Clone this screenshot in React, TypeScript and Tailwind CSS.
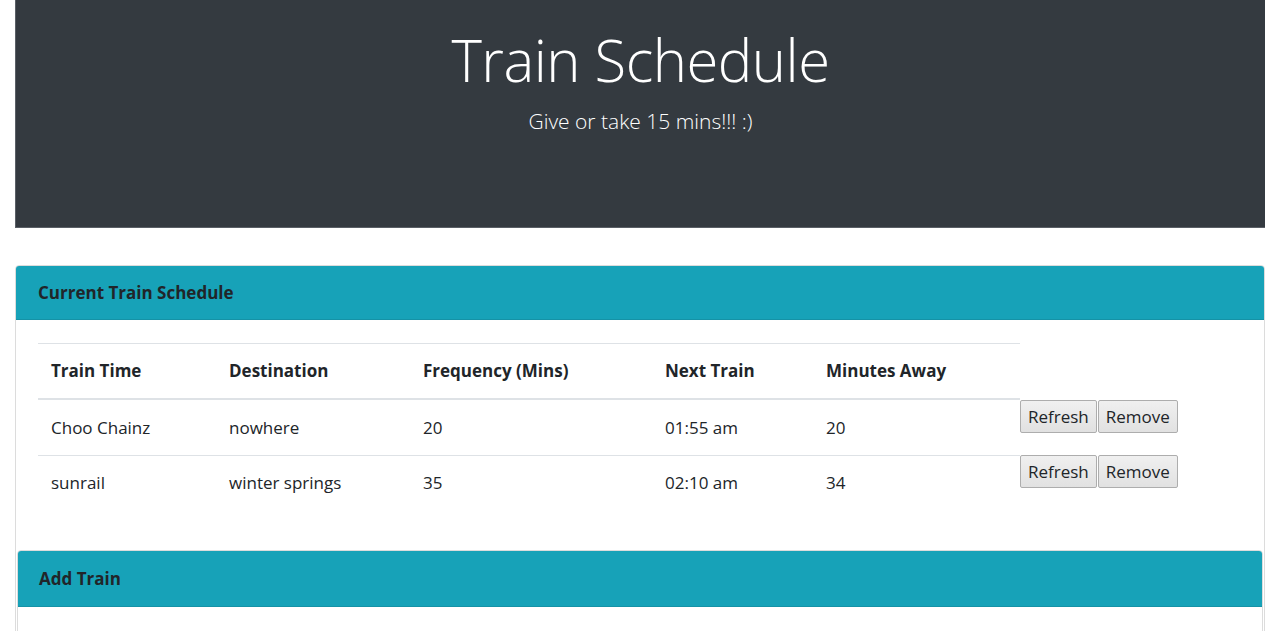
import React from "react";

const rows = [
  { name: "Choo Chainz", dest: "nowhere", freq: "20", next: "01:55 am", away: "20" },
  { name: "sunrail", dest: "winter springs", freq: "35", next: "02:10 am", away: "34" },
];

const cols = ["w-[178px]", "w-[194px]", "w-[242px]", "w-[161px]", "w-[207px]"];

function Btn({ children }: { children: React.ReactNode }) {
  return (
    <button className="h-[33px] px-[7px] border border-[#adadad] rounded-[2px] bg-gradient-to-b from-[#f0f0f0] to-[#e1e1e1] text-[17px] text-[#212529] leading-none">
      {children}
    </button>
  );
}

export default function App() {
  return (
    <div
      className="w-[1280px] h-[631px] overflow-hidden bg-white text-[#212529]"
      style={{ fontFamily: '"Open Sans", "Noto Sans", sans-serif' }}
    >
      <div className="px-[15px]">
        <div className="h-[228px] bg-[#343a40] border-l border-b border-[#5a5f66] flex flex-col items-center pt-[21px]">
          <h1 className="text-[58px] font-light text-white leading-[78px] tracking-[-0.5px]">Train Schedule</h1>
          <p className="text-[21px] font-light text-white leading-[28px] mt-[8px]">Give or take 15 mins!!! :)</p>
        </div>
        <div className="mt-[37px] border border-[#dcdcdc] rounded-[4px] h-[400px]">
          <div className="h-[54px] bg-[#17a2b8] border-b border-[#1592a6] rounded-t-[3px] flex items-center px-[22px]">
            <span className="text-[17px] font-bold">Current Train Schedule</span>
          </div>
          <div className="px-[22px] pt-[23px] pb-[40px]">
            <div className="flex">
              <div className="w-[982px]">
                <div className="flex h-[57px] items-center border-t border-b-2 border-[#dee2e6]">
                  {["Train Time", "Destination", "Frequency (Mins)", "Next Train", "Minutes Away"].map((h, i) => (
                    <div key={h} className={`${cols[i]} pl-[13px] text-[17px] font-bold`}>{h}</div>
                  ))}
                </div>
                {rows.map((r, ri) => (
                  <div key={r.name} className={`flex h-[55px] items-center ${ri > 0 ? "border-t border-[#dee2e6]" : ""}`}>
                    {[r.name, r.dest, r.freq, r.next, r.away].map((c, i) => (
                      <div key={i} className={`${cols[i]} pl-[13px] text-[17px]`}>{c}</div>
                    ))}
                  </div>
                ))}
              </div>
              <div className="flex flex-col pt-[57px]">
                {rows.map((r) => (
                  <div key={r.name} className="h-[55px] flex items-start gap-[1px]">
                    <Btn>Refresh</Btn>
                    <Btn>Remove</Btn>
                  </div>
                ))}
              </div>
            </div>
          </div>
          <div className="mx-[1px] border border-[#dcdcdc] rounded-[4px]">
            <div className="h-[56px] bg-[#17a2b8] border-b border-[#1592a6] rounded-t-[3px] flex items-center px-[21px]">
              <span className="text-[17px] font-bold">Add Train</span>
            </div>
            <div className="h-[100px]" />
          </div>
        </div>
      </div>
    </div>
  );
}
